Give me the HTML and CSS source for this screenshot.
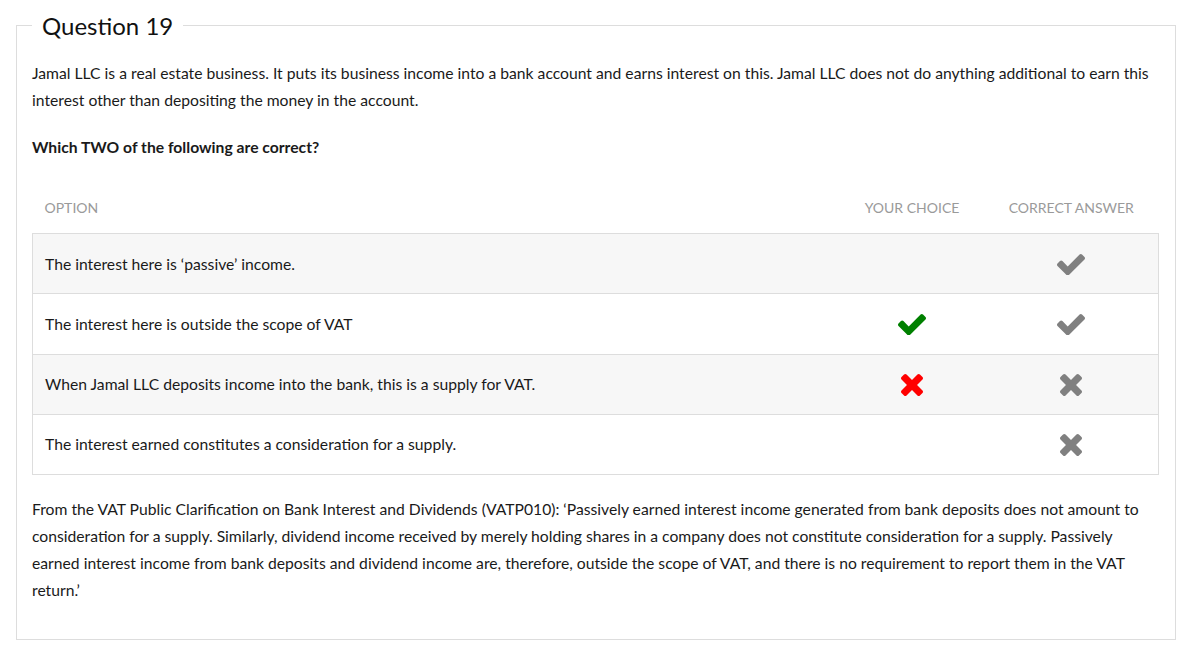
FILE: index.html
```html
<!DOCTYPE html>
<html lang="en">
<head>
<meta charset="utf-8">
<title>Question 19</title>
<link rel="stylesheet" href="styles.css">
</head>
<body>
<fieldset class="question">
  <legend class="question-title">Question 19</legend>
  <p class="stem">Jamal LLC is a real estate business. It puts its business income into a bank account and earns interest on this. Jamal LLC does not do anything additional to earn this interest other than depositing the money in the account.</p>
  <p class="prompt">Which TWO of the following are correct?</p>
  <table class="answers">
    <thead>
      <tr>
        <th class="col-option">Option</th>
        <th class="col-choice">Your choice</th>
        <th class="col-correct">Correct answer</th>
      </tr>
    </thead>
    <tbody>
      <tr class="shaded">
        <td class="col-option">The interest here is ‘passive’ income.</td>
        <td class="col-choice"></td>
        <td class="col-correct"><svg class="ic-check grey" viewBox="121 334 1550 1188"><path d="M1671 566q0 40-28 68l-724 724-136 136q-28 28-68 28t-68-28l-136-136-362-362q-28-28-28-68t28-68l136-136q28-28 68-28t68 28l294 295 656-657q28-28 68-28t68 28l136 136q28 28 28 68z"/></svg></td>
      </tr>
      <tr>
        <td class="col-option">The interest here is outside the scope of VAT</td>
        <td class="col-choice"><svg class="ic-check green" viewBox="121 334 1550 1188"><path d="M1671 566q0 40-28 68l-724 724-136 136q-28 28-68 28t-68-28l-136-136-362-362q-28-28-28-68t28-68l136-136q28-28 68-28t68 28l294 295 656-657q28-28 68-28t68 28l136 136q28 28 28 68z"/></svg></td>
        <td class="col-correct"><svg class="ic-check grey" viewBox="121 334 1550 1188"><path d="M1671 566q0 40-28 68l-724 724-136 136q-28 28-68 28t-68-28l-136-136-362-362q-28-28-28-68t28-68l136-136q28-28 68-28t68 28l294 295 656-657q28-28 68-28t68 28l136 136q28 28 28 68z"/></svg></td>
      </tr>
      <tr class="shaded">
        <td class="col-option">When Jamal LLC deposits income into the bank, this is a supply for VAT.</td>
        <td class="col-choice"><svg class="ic-times red" viewBox="302 366 1188 1188"><path d="M1490 1322q0 40-28 68l-136 136q-28 28-68 28t-68-28l-294-294-294 294q-28 28-68 28t-68-28l-136-136q-28-28-28-68t28-68l294-294-294-294q-28-28-28-68t28-68l136-136q28-28 68-28t68 28l294 294 294-294q28-28 68-28t68 28l136 136q28 28 28 68t-28 68l-294 294 294 294q28 28 28 68z"/></svg></td>
        <td class="col-correct"><svg class="ic-times grey" viewBox="302 366 1188 1188"><path d="M1490 1322q0 40-28 68l-136 136q-28 28-68 28t-68-28l-294-294-294 294q-28 28-68 28t-68-28l-136-136q-28-28-28-68t28-68l294-294-294-294q-28-28-28-68t28-68l136-136q28-28 68-28t68 28l294 294 294-294q28-28 68-28t68 28l136 136q28 28 28 68t-28 68l-294 294 294 294q28 28 28 68z"/></svg></td>
      </tr>
      <tr>
        <td class="col-option">The interest earned constitutes a consideration for a supply.</td>
        <td class="col-choice"></td>
        <td class="col-correct"><svg class="ic-times grey" viewBox="302 366 1188 1188"><path d="M1490 1322q0 40-28 68l-136 136q-28 28-68 28t-68-28l-294-294-294 294q-28 28-68 28t-68-28l-136-136q-28-28-28-68t28-68l294-294-294-294q-28-28-28-68t28-68l136-136q28-28 68-28t68 28l294 294 294-294q28-28 68-28t68 28l136 136q28 28 28 68t-28 68l-294 294 294 294q28 28 28 68z"/></svg></td>
      </tr>
    </tbody>
  </table>
  <p class="explanation">From the VAT Public Clarification on Bank Interest and Dividends (VATP010): ‘Passively earned interest income generated from bank deposits does not amount to consideration for a supply. Similarly, dividend income received by merely holding shares in a company does not constitute consideration for a supply. Passively earned interest income from bank deposits and dividend income are, therefore, outside the scope of VAT, and there is no requirement to report them in the VAT return.’</p>
</fieldset>
</body>
</html>
```

FILE: styles.css
```css
html, body {
  margin: 0;
  padding: 0;
  background: #ffffff;
}

body {
  font-family: Lato, "Liberation Sans", sans-serif;
  font-size: 15.7px;
  line-height: 27px;
  color: #1a1a1a;
}

.question {
  margin: 11px 14px 8px 16px;
  padding: 0 16px 15px 15px;
  border: 1px solid #dddddd;
  min-width: 0;
}

.question-title {
  padding: 0 10px;
  font-size: 24px;
  line-height: 29px;
  color: #111111;
}

.stem {
  margin: 20px 0 20px;
}

.prompt {
  margin: 0 0 20px;
  font-weight: 700;
}

.answers {
  width: 100%;
  border-collapse: collapse;
  margin: 1px 0 0;
}

.answers th {
  height: 52px;
  padding: 0 12px;
  font-size: 14px;
  font-weight: 400;
  text-transform: uppercase;
  color: #9a9a9a;
  vertical-align: middle;
}

.answers th.col-option {
  text-align: left;
  padding-left: 12px;
}

.answers td {
  height: 59.25px;
  padding: 0 12px;
  border: 1px solid #dddddd;
  vertical-align: middle;
  line-height: 20px;
}

.answers td.col-option {
  padding-left: 12px;
  border-right: none;
}

.answers td.col-choice {
  border-left: none;
  border-right: none;
}

.answers td.col-correct {
  border-left: none;
}

.col-choice {
  width: 120px;
  text-align: center;
}

.col-correct {
  width: 150px;
  text-align: center;
}

.answers tr.shaded td {
  background: #f7f7f7;
}

.answers svg {
  display: inline-block;
  vertical-align: middle;
}

.ic-check {
  width: 28px;
  height: 21.5px;
}

.ic-times {
  width: 22px;
  height: 22px;
}

.green { fill: #008000; }
.red { fill: #ff0000; }
.grey { fill: #808080; }

.explanation {
  margin: 21px 0 20px;
}
```
